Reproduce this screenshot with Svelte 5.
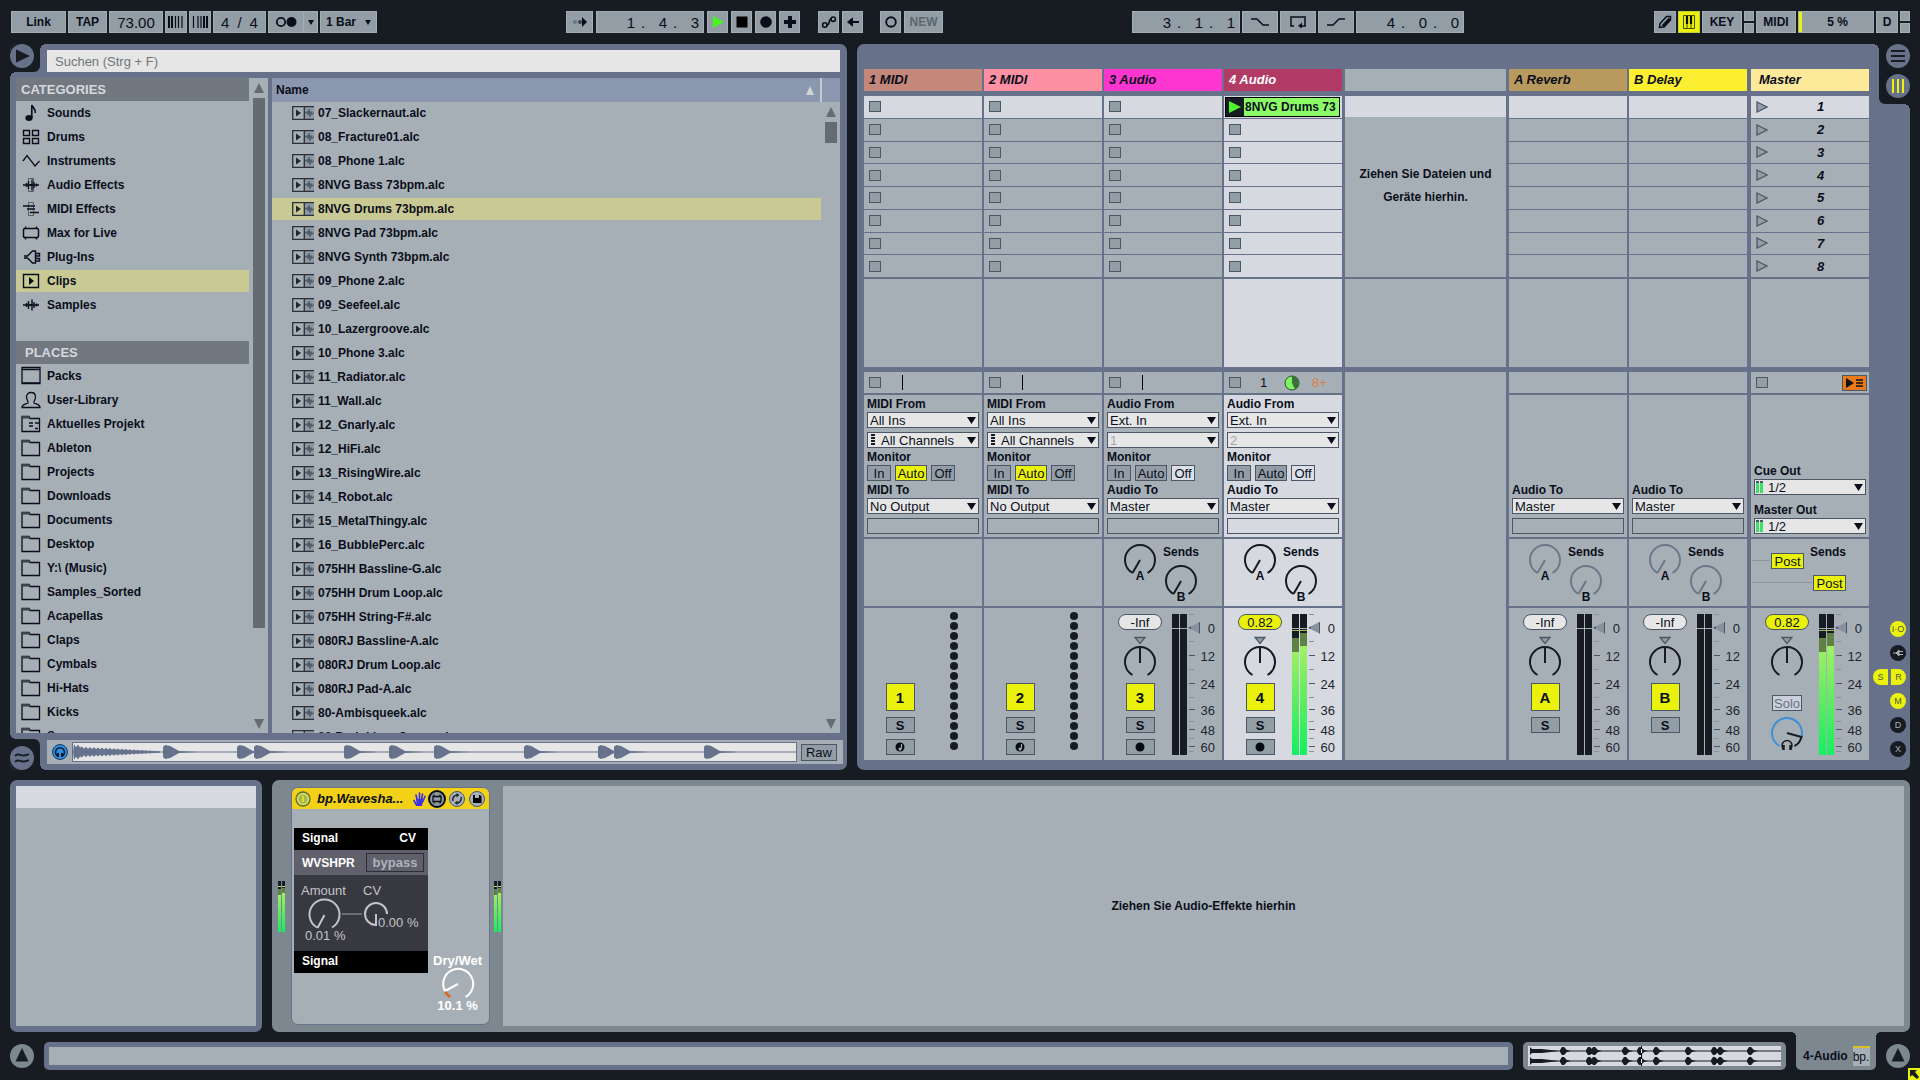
<script lang="ts">
	type Kind = 'midi' | 'audio' | 'return' | 'master';
	type Track = {
		id: string;
		title: string;
		color: string;
		kind: Kind;
		badge: string;
		input?: string;
		channel?: string;
		output?: string;
		monitor?: string;
		level?: boolean;
		selected?: boolean;
	};

	const categories = [
		{ name: 'Sounds', icon: 'note' },
		{ name: 'Drums', icon: 'pads' },
		{ name: 'Instruments', icon: 'wave' },
		{ name: 'Audio Effects', icon: 'audiofx' },
		{ name: 'MIDI Effects', icon: 'midifx' },
		{ name: 'Max for Live', icon: 'max' },
		{ name: 'Plug-Ins', icon: 'plug' },
		{ name: 'Clips', icon: 'clip' },
		{ name: 'Samples', icon: 'sample' }
	];

	const places = [
		{ name: 'Packs', icon: 'pack' },
		{ name: 'User-Library', icon: 'user' },
		{ name: 'Aktuelles Projekt', icon: 'project' },
		...[
			'Ableton', 'Projects', 'Downloads', 'Documents', 'Desktop', 'Y:\\ (Music)', 'Samples_Sorted',
			'Acapellas', 'Claps', 'Cymbals', 'Hi-Hats', 'Kicks', 'Snares'
		].map((name) => ({ name, icon: 'folder' }))
	];

	const files = [
		'07_Slackernaut', '08_Fracture01', '08_Phone 1', '8NVG Bass 73bpm', '8NVG Drums 73bpm',
		'8NVG Pad 73bpm', '8NVG Synth 73bpm', '09_Phone 2', '09_Seefeel', '10_Lazergroove',
		'10_Phone 3', '11_Radiator', '11_Wall', '12_Gnarly', '12_HiFi', '13_RisingWire', '14_Robot',
		'15_MetalThingy', '16_BubblePerc', '075HH Bassline-G', '075HH Drum Loop', '075HH String-F#',
		'080RJ Bassline-A', '080RJ Drum Loop', '080RJ Pad-A', '80-Ambisqueek', '80-Brainkiner-Sonne'
	];

	const tracks: Track[] = [
		{ id: 't1', title: '1 MIDI', color: '#c3887a', kind: 'midi', badge: '1', input: 'All Ins', channel: 'All Channels', output: 'No Output', monitor: 'Auto' },
		{ id: 't2', title: '2 MIDI', color: '#fd91a3', kind: 'midi', badge: '2', input: 'All Ins', channel: 'All Channels', output: 'No Output', monitor: 'Auto' },
		{ id: 't3', title: '3 Audio', color: '#fd36d0', kind: 'audio', badge: '3', input: 'Ext. In', channel: '1', output: 'Master', monitor: 'Off' },
		{ id: 't4', title: '4 Audio', color: '#b23b65', kind: 'audio', badge: '4', input: 'Ext. In', channel: '2', output: 'Master', monitor: 'Off', level: true, selected: true }
	];

	const mains: Track[] = [
		{ id: 'ra', title: 'A Reverb', color: '#b99a5e', kind: 'return', badge: 'A', output: 'Master' },
		{ id: 'rb', title: 'B Delay', color: '#fcee30', kind: 'return', badge: 'B', output: 'Master' },
		{ id: 'mm', title: 'Master', color: '#fde99a', kind: 'master', badge: '', level: true }
	];

	const scenes = [1, 2, 3, 4, 5, 6, 7, 8];
	const scale = [
		{ label: '0', y: 14 },
		{ label: '12', y: 42 },
		{ label: '24', y: 70 },
		{ label: '36', y: 96 },
		{ label: '48', y: 116 },
		{ label: '60', y: 133 }
	];
	const minorTicks = [1, 28, 56, 84, 108, 125, 138];

	let category = $state('Clips');
	let file = $state('8NVG Drums 73bpm');
	let search = $state('');

	const previewHits = [90, 164, 181, 271, 316, 361, 451, 525, 541, 631];
	const overviewHits = [32, 58, 63, 94, 109, 125, 157, 183, 189, 219];

	// sharp attack, then a leaf shaped decay
	function hit(x: number, mid: number, h: number, w: number) {
		const shape = [[0, 0.75], [0.15, 1], [0.45, 0.85], [0.75, 0.45], [1, 0.15], [2.2, 0]];
		const top = shape.map(([dx, dy]) => `${x + w * dx} ${mid - h * dy}`);
		const bottom = shape.map(([dx, dy]) => `${x + w * dx} ${mid + h * dy}`).reverse();
		return `M${[...top, ...bottom].join('L')}Z`;
	}

	function blob(x: number, mid: number) {
		return `M${x - 2} ${mid - 1}L${x} ${mid - 4}L${x + 2} ${mid - 4}L${x + 5} ${mid - 1}L${x + 9} ${mid}L${x + 5} ${mid + 1}L${x + 2} ${mid + 4}L${x} ${mid + 4}L${x - 2} ${mid + 1}Z`;
	}

	// decaying tone at the head of the sample
	function burst() {
		const height = (x: number) => (x < 8 ? 8 : 6) * Math.pow(1 - x / 100, 0.9) * (x % 4 === 1 ? 1 : 0.6);
		let d = 'M0 9';
		for (let x = 1; x < 88; x += 2) d += `L${x} ${(9 - height(x)).toFixed(1)}`;
		for (let x = 87; x > 0; x -= 2) d += `L${x} ${(9 + height(x)).toFixed(1)}`;
		return d + 'Z';
	}

	const previewPath = burst() + previewHits.map((x) => hit(x, 9, 7, 16)).join('');
	const overviewPath = [5, 15]
		.map((mid) => `M2 ${mid - 4}L4 ${mid - 2}L14 ${mid - 2}L31 ${mid}L14 ${mid + 2}L4 ${mid + 2}L2 ${mid + 4}Z` + overviewHits.map((x) => blob(x + 2, mid)).join(''))
		.join('');
</script>

{#snippet sideIcon(name: string)}
	<svg class="side-icon" viewBox="0 0 22 20" aria-hidden="true">
		{#if name === 'note'}
			<ellipse cx="9" cy="15" rx="3.6" ry="3" fill="#0a0e1a" />
			<path d="M11.8 15V2c1 3 4 3.5 3.4 8" fill="none" stroke="#0a0e1a" stroke-width="1.6" />
		{:else if name === 'pads'}
			<path d="M3.5 3.5h6v5h-6zM12.5 3.5h6v5h-6zM3.5 11.5h6v5h-6zM12.5 11.5h6v5h-6z" fill="none" stroke="#0a0e1a" stroke-width="1.4" />
		{:else if name === 'wave'}
			<path d="M3 10l4-5.5L15 15l4.5-5" fill="none" stroke="#0a0e1a" stroke-width="1.3" />
		{:else if name === 'audiofx' || name === 'sample'}
			<path d="M3 10h16M6.5 8v4M8.5 6v8M10.5 9v2M12 4.5v11M14 7v6M16.5 8.5v3" fill="none" stroke="#0a0e1a" stroke-width="1.4" />
			{#if name === 'audiofx'}<path d="M8.500 3.500h5v13h-5z" fill="none" stroke="#0a0e1a" stroke-opacity=".5" />{/if}
		{:else if name === 'midifx'}
			<path d="M3 7h12M7 10h8M10 13.500h9" fill="none" stroke="#0a0e1a" stroke-width="1.5" />
			<path d="M8.500 3.500h5v13h-5z" fill="none" stroke="#0a0e1a" stroke-opacity=".5" />
		{:else if name === 'max'}
			<path d="M5 5.500h12c1.300 0 1.500.500 1.500 1.500v6c0 1-.200 1.500-1.500 1.500H5c-1.300 0-1.500-.500-1.500-1.500V7c0-1 .200-1.500 1.500-1.500zM5.500 5.500v-2M16.500 5.500v-2M5.500 14.500v2M16.500 14.500v2" fill="none" stroke="#0a0e1a" stroke-width="1.5" />
		{:else if name === 'plug'}
			<path d="M4 9h3.500l5-5h3v12h-3l-5-5H4M15.500 6.500h4v2.500h-4M15.500 11.500h4V14h-4" fill="none" stroke="#0a0e1a" stroke-width="1.4" />
		{:else if name === 'clip'}
			<path d="M3.5 3.5h15v13h-15z" fill="none" stroke="#0a0e1a" stroke-width="1.4" />
			<path d="M9 6l5 4-5 4z" fill="#0a0e1a" />
		{:else if name === 'pack'}
			<path d="M2 1.5h18v16H2z" fill="none" stroke="#0a0e1a" stroke-width="1.3" />
			<path d="M2 3.5h18M2 17h18" stroke="#0a0e1a" stroke-width="1.6" />
		{:else if name === 'user'}
			<path d="M2 17.5c0-3 3-3 6-4.5 1-1-1.5-3-1.5-6C6.5 4 8.500 2.5 11 2.5S15.5 4 15.5 7c0 3-2.5 5-1.5 6 3 1.5 6 1.5 6 4.5z" fill="none" stroke="#0a0e1a" stroke-width="1.3" />
		{:else}
			<path d="M2 2.5h7l1 2h9.5v13H2z" fill="none" stroke="#0a0e1a" stroke-width="1.3" />
			<path d="M2 2h7l1 2.5H2z" fill="#3c434c" />
			{#if name === 'project'}<path d="M9 9h4M15 9h4M9 12h4M15 14.5h3" stroke="#0a0e1a" stroke-width="1.5" />{/if}
		{/if}
	</svg>
{/snippet}

{#snippet fileIcon()}
	<svg class="file-icon" viewBox="0 0 22 14" aria-hidden="true">
		<path d="M12 0h10v14H12z" fill="#8d97a1" />
		<path d="M22 .7H.7v12.6H22M12.3 0v14" fill="none" stroke="#2a3038" stroke-width="1.3" />
		<path d="M4 3.500l5 3.500-5 3.500z" fill="#20262e" />
		<path d="M13 7h1.500l.5-1.500 1 3 1-5 1 7 1-5 1 3 .5-1.500H22" stroke="#454d57" stroke-width=".9" fill="none" />
	</svg>
{/snippet}

{#snippet knob(color: string, angle: number, letter: string)}
	<svg class="knob" viewBox="0 0 40 42" aria-hidden="true">
		<path d="M12.5 30A15 15 0 1 1 27.5 30" fill="none" stroke={color} stroke-width="2" />
		<path d="M20 17V32" stroke={color} stroke-width="2" transform="rotate({angle} 20 17)" />
		<text x="20" y="37" text-anchor="middle">{letter}</text>
	</svg>
{/snippet}

{#snippet position(parts: string[], label: string)}
	<div class="cell position" role="group" aria-label={label}>
		{#each parts as part, i}
			<span>{part}</span>{#if i < 2}<span class="dot">.</span>{/if}
		{/each}
	</div>
{/snippet}

{#snippet picker(id: string, value: string, icon: string, dim: boolean)}
	<div class="picker" class:dim>
		{#if icon === 'midi'}
			<svg viewBox="0 0 4 12" aria-hidden="true"><path d="M2 0v12" stroke="#171c22" stroke-width="4" stroke-dasharray="2 1" /></svg>
		{:else if icon === 'level'}
			<svg viewBox="0 0 8 12" aria-hidden="true"><path d="M0 0h3v2H0zM4 0h3v2H4z" fill="#4d5660" /><path d="M0 2h3v10H0zM4 2h3v10H4z" fill="#3fe069" /></svg>
		{/if}
		<select {id}><option>{value}</option></select>
	</div>
{/snippet}

{#snippet minimeter()}
	<svg class="minimeter" viewBox="0 0 7 51" aria-hidden="true">
		<path d="M0 0h3v51H0zM4 0h3v51H4z" fill="#171c22" />
		<path d="M0 8h3v6H0zM4 7h3v6H4z" fill="#5f8143" />
		<path d="M0 5h3v1H0zM4 5h3v1H4z" fill="#cdd66e" />
		<path d="M0 14h3v37H0zM4 12h3v39H4z" fill="url(#lvl)" />
	</svg>
{/snippet}

{#snippet stop()}
	<button class="stop" aria-label="Stop"></button>
{/snippet}

{#snippet column(t: Track)}
	<section class="track {t.kind} {t.id}" class:selected={t.selected} aria-label={t.title}>
		<h3 style="background: {t.color}">{t.title}</h3>
		<div class="slots">
			{#each scenes as n}
				<div class="slot" class:hot={n === 1}>
					{#if t.kind === 'master'}
						<button class="launch" aria-label="Scene {n}">
							<svg viewBox="0 0 12 12" aria-hidden="true"><path d="M1 1l10 5-10 5z" fill="#929da6" stroke="#4b5766" stroke-width="1.3" /></svg>
						</button>
						<span class="scene">{n}</span>
					{:else if t.selected && n === 1}
						<button class="playing">
							<span class="go"><svg viewBox="0 0 12 12" aria-hidden="true"><path d="M0 0l12 6-12 6z" fill="#50f428" /></svg></span>
							<span class="name">8NVG Drums 73</span>
						</button>
					{:else if t.kind !== 'return'}
						{@render stop()}
					{/if}
				</div>
			{/each}
		</div>
		<div class="drop"></div>
		<div class="state">
			{#if t.kind !== 'return'}{@render stop()}{/if}
			{#if t.selected}
				<span class="count">1</span>
				<svg class="pie" viewBox="0 0 16 16" aria-hidden="true">
					<circle cx="8" cy="8" r="7" fill="#7cf45f" stroke="#2f4a35" />
					<path d="M8 1a7 7 0 0 1 3 13.3L8 8z" fill="#3f6f39" />
				</svg>
				<span class="loops">8+</span>
			{:else if t.kind === 'midi' || t.kind === 'audio'}
				<i class="bar"></i>
			{:else if t.kind === 'master'}
				<button class="back" aria-label="Back to arrangement">
					<svg viewBox="0 0 20 12" aria-hidden="true"><path d="M1 1l8 5-8 5z" fill="#111" /><path d="M11 3h7M11 6h7M11 9h7" stroke="#111" stroke-width="1.5" /></svg>
				</button>
			{/if}
		</div>
		<div class="io">
			{#if t.input}
				<label for="{t.id}-in">{t.kind === 'midi' ? 'MIDI' : 'Audio'} From</label>
				{@render picker(`${t.id}-in`, t.input, '', false)}
				{@render picker(`${t.id}-ch`, t.channel ?? '', t.kind === 'midi' ? 'midi' : '', t.kind === 'audio')}
				<span class="label">Monitor</span>
				<div class="monitor" role="group" aria-label="Monitor">
					{#each ['In', 'Auto', 'Off'] as mode}
						<button class={mode.toLowerCase()} class:on={t.monitor === mode}>{mode}</button>
					{/each}
				</div>
			{/if}
			{#if t.kind === 'master'}
				<label for="cue">Cue Out</label>
				{@render picker('cue', '1/2', 'level', false)}
				<label class="second" for="main-out">Master Out</label>
				{@render picker('main-out', '1/2', 'level', false)}
			{:else}
				<label for="{t.id}-out">{t.kind === 'midi' ? 'MIDI' : 'Audio'} To</label>
				{@render picker(`${t.id}-out`, t.output ?? '', '', false)}
				<div class="blank"></div>
			{/if}
		</div>
		<div class="sends">
			{#if t.kind === 'master'}
				<div class="post first"><i></i><button>Post</button></div>
				<span class="label">Sends</span>
				<div class="post"><i></i><button>Post</button></div>
			{:else if t.kind !== 'midi'}
				{@render knob(t.kind === 'return' ? '#6d7789' : '#171c22', 30, 'A')}
				<div class="send-b">
					<span class="label">Sends</span>
					{@render knob(t.kind === 'return' ? '#6d7789' : '#171c22', 30, 'B')}
				</div>
			{/if}
		</div>
		<div class="mixer">
			<div class="strip">
				{#if t.kind !== 'midi'}
					<button class="pill" class:on={t.level}>{t.level ? '0.82' : '-Inf'}</button>
					<svg class="pan" viewBox="0 0 34 42" aria-hidden="true">
						<path d="M12 1.5h10l-5 6z" fill="#929da6" stroke="#4b5766" stroke-width="1.3" />
						<path d="M9.5 39A15 15 0 1 1 24.5 39" fill="none" stroke="#171c22" stroke-width="2" />
						<path d="M17 11v16" stroke="#171c22" stroke-width="2" />
					</svg>
				{/if}
				{#if t.kind === 'master'}
					<button class="cue-solo">Solo</button>
					<svg class="cue" viewBox="0 0 34 36" aria-hidden="true">
						<path d="M9.5 31A15 15 0 1 1 31.5 22" fill="none" stroke="#3c8fd6" stroke-width="2" />
						<path d="M17 18l14.5 4c-1 4-3 7-7 9" fill="none" stroke="#171c22" stroke-width="2" />
						<path d="M13.5 34a5 5 0 1 1 7 0" fill="none" stroke="#171c22" stroke-width="1.5" />
						<path d="M13.5 30v5M20.5 30v5" stroke="#171c22" stroke-width="2.5" />
					</svg>
				{:else}
					<button class="activate">{t.badge}</button>
					<button class="solo">S</button>
					{#if t.kind !== 'return'}
						<button class="arm" aria-label="Arm">
							<svg viewBox="0 0 12 12" aria-hidden="true">
								<circle cx="6" cy="6" r="4.5" fill="#070b14" />
								{#if t.kind === 'midi'}<path d="M7.5 3v4.5" stroke="#a7afb6" stroke-width="1.2" /><circle cx="6" cy="8" r="1.5" fill="#a7afb6" />{/if}
							</svg>
						</button>
					{/if}
				{/if}
			</div>
			{#if t.kind === 'midi'}
				<svg class="dots" viewBox="0 0 10 142" aria-hidden="true">
					{#each Array(14) as _, i}<circle cx="5" cy={2 + i * 10} r="4" fill="#171c22" />{/each}
				</svg>
			{:else}
				<div class="fader">
					<svg viewBox="0 0 48 142" aria-hidden="true">
						<path d="M0 0h7v141H0zM8 0h7v141H8z" fill="#171c22" />
						{#if t.level}
							<path d="M0 24h7v14H0zM8 19h7v13H8z" fill="#5f8143" />
							<path d="M0 38h7v103H0zM8 32h7v109H8z" fill="url(#lvl)" />
							<path d="M0 16.5h15" stroke="#a3bd5c" />
						{/if}
						<path d="M0 14.5h15" stroke="#a7afb6" />
						{#each minorTicks as y}<path d="M17 {y - 0.5}h5" stroke="#87919b" />{/each}
						{#each scale as s}
							{#if s.y > 14}<path d="M17 {s.y - 0.5}h6" stroke="#4b5766" />{/if}
							<text x="43" y={s.y + 5} text-anchor="end">{s.label}</text>
						{/each}
					</svg>
					<input type="range" min="0" max="100" value="94" aria-label="{t.title} volume" />
				</div>
			{/if}
		</div>
	</section>
{/snippet}

{#snippet scrollArrow(down: boolean)}
	<svg class="arrow" viewBox="0 0 10 10" aria-hidden="true"><path d={down ? 'M0 0h10L5 10z' : 'M0 10h10L5 0z'} fill="#646b71" /></svg>
{/snippet}

<svg class="defs" width="0" height="0" aria-hidden="true">
	<defs>
		<linearGradient id="lvl" x1="0" y1="0" x2="0" y2="1">
			<stop offset="0" stop-color="#a2f064" />
			<stop offset=".5" stop-color="#5feb62" />
			<stop offset="1" stop-color="#14f060" />
		</linearGradient>
	</defs>
</svg>

<div class="app">
	<header class="toolbar">
		<div class="group">
			<button class="cell link">Link</button>
			<button class="cell text">TAP</button>
			<div class="cell tempo">73.00</div>
			<button class="cell icon" aria-label="Nudge down"><svg viewBox="0 0 16 12"><path d="M1 0v12M4 0v12" stroke="#0a0e1a" stroke-width="2" /><path d="M7.5 0v12M10.5 0v12M14 0v12" stroke="#0a0e1a" stroke-width="1.2" /></svg></button>
			<button class="cell icon" aria-label="Nudge up"><svg viewBox="0 0 16 12"><path d="M1.5 0v12M6 0v12M9 0v12" stroke="#0a0e1a" stroke-width="1.2" /><path d="M12 0v12M15 0v12" stroke="#0a0e1a" stroke-width="2" /></svg></button>
			<div class="cell signature"><span>4</span><span>/</span><span>4</span></div>
			<button class="cell metro" aria-label="Metronome">
				<svg viewBox="0 0 22 12"><circle cx="6" cy="6" r="4.2" fill="none" stroke="#0a0e1a" stroke-width="1.8" /><circle cx="16.5" cy="6" r="5" fill="#0a0e1a" /></svg>
				<span class="split"><svg viewBox="0 0 6 5"><path d="M0 0h6L3 5z" fill="#0a0e1a" /></svg></span>
			</button>
			<div class="cell quant"><select aria-label="Quantization"><option>1 Bar</option></select></div>
		</div>

		<div class="group transport">
			<button class="cell follow" aria-label="Follow"><svg viewBox="0 0 16 10"><circle cx="3" cy="5" r="2" fill="#6b7580" /><circle cx="8" cy="5" r="2" fill="#3a424c" /><path d="M10 0v10l5-5z" fill="#0a0e1a" /></svg></button>
			{@render position(['1', '4', '3'], 'Arrangement position')}
			<button class="cell icon" aria-label="Play"><svg viewBox="0 0 16 12"><path d="M3 0l11 6-11 6z" fill="#46f51c" /></svg></button>
			<button class="cell icon" aria-label="Stop"><svg viewBox="0 0 16 12"><path d="M2.5 .5h11v11h-11z" fill="#000" /></svg></button>
			<button class="cell icon" aria-label="Record"><svg viewBox="0 0 16 12"><circle cx="8" cy="6" r="5.8" fill="#0a0e1a" /></svg></button>
			<button class="cell icon" aria-label="Overdub"><svg viewBox="0 0 16 12"><path d="M8 0v12M2 6h12" stroke="#0a0e1a" stroke-width="4" /></svg></button>
			<button class="cell icon auto" aria-label="Automation arm"><svg viewBox="0 0 16 12"><circle cx="3.800" cy="9" r="2.2" fill="none" stroke="#0a0e1a" stroke-width="1.6" /><circle cx="12.2" cy="3.200" r="2.2" fill="none" stroke="#0a0e1a" stroke-width="1.6" /><path d="M6 9c3 0 1.5-6 4-6" fill="none" stroke="#0a0e1a" stroke-width="1.6" /></svg></button>
			<button class="cell icon" aria-label="Re-enable automation"><svg viewBox="0 0 16 12"><path d="M2.500 6l5-4v8z" fill="#0a0e1a" stroke="#0a0e1a" /><path d="M7 6h7" stroke="#0a0e1a" stroke-width="2" /></svg></button>
			<button class="cell icon session-rec" aria-label="Session record"><svg viewBox="0 0 16 12"><circle cx="8" cy="6" r="4.8" fill="none" stroke="#0a0e1a" stroke-width="1.9" /></svg></button>
			<button class="cell text faint">NEW</button>
		</div>

		<div class="group">
			{@render position(['3', '1', '1'], 'Loop start')}
			<button class="cell wide" aria-label="Punch in"><svg viewBox="0 0 18 12"><path d="M0 3h6l6 6h6" fill="none" stroke="#0a0e1a" stroke-width="1.5" /></svg></button>
			<button class="cell wide" aria-label="Loop"><svg viewBox="0 0 18 12"><path d="M5 10H2V1h14v9h-4" fill="none" stroke="#0a0e1a" stroke-width="1.5" /><path d="M13 6.5v6L9 10z" fill="#0a0e1a" /></svg></button>
			<button class="cell wide" aria-label="Punch out"><svg viewBox="0 0 18 12"><path d="M0 9h6l6-6h6" fill="none" stroke="#0a0e1a" stroke-width="1.5" /></svg></button>
			{@render position(['4', '0', '0'], 'Loop length')}
		</div>

		<div class="group">
			<button class="cell icon" aria-label="Draw mode"><svg viewBox="0 0 16 14"><path d="M2.500 12.500l.5-4L9.500 1.500h4v3L6.500 12z" fill="none" stroke="#0a0e1a" stroke-width="1.5" /><path d="M6 11.500L13 4" stroke="#0a0e1a" stroke-width="3.500" /></svg></button>
			<button class="cell icon lit" aria-label="Computer keyboard"><svg viewBox="0 0 16 14"><path d="M2.5 .5h11v13h-11zM6 9v5M10 9v5" fill="none" stroke="#4b5010" /><path d="M6 1v8M10 1v8" stroke="#0a0e1a" stroke-width="2.2" /></svg></button>
			<button class="cell text">KEY</button>
			<div class="pair"><i></i><i></i></div>
			<button class="cell text">MIDI</button>
			<div class="cell cpu"><i></i><span>5 %</span></div>
			<button class="cell icon">D</button>
			<div class="pair"><i></i><i></i></div>
		</div>
	</header>

	<div class="workspace">
		<aside class="browser">
			<div class="top">
				<div class="notch upper">
					<button class="round" aria-label="Hide browser"><svg viewBox="0 0 24 24"><circle cx="12" cy="12" r="12" fill="#677189" /><path d="M6 5.5v13L20 12z" fill="#171c22" /></svg></button>
				</div>
				<input type="text" bind:value={search} placeholder="Suchen (Strg + F)" aria-label="Suchen" />
			</div>

			<div class="lists">
				<nav class="sidebar">
					<div class="scroll">
						<h2>CATEGORIES</h2>
						<ul>
							{#each categories as c}
								<li><button class:active={c.name === category} onclick={() => (category = c.name)}>{@render sideIcon(c.icon)}{c.name}</button></li>
							{/each}
						</ul>
						<h2 class="places">PLACES</h2>
						<ul>
							{#each places as p}
								<li><button>{@render sideIcon(p.icon)}{p.name}</button></li>
							{/each}
						</ul>
					</div>
					<div class="scrollbar">
						{@render scrollArrow(false)}
						<i class="thumb tall"></i>
						{@render scrollArrow(true)}
					</div>
				</nav>

				<div class="content">
					<div class="head"><span>Name</span><svg viewBox="0 0 10 10" aria-hidden="true"><path d="M0 10h8L4 1z" fill="#d0d5d2" /></svg></div>
					<div class="rows">
						<ul class="scroll">
							{#each files as f}
								<li><button class:active={f === file} onclick={() => (file = f)}>{@render fileIcon()}{f}.alc</button></li>
							{/each}
						</ul>
						<div class="scrollbar">
							{@render scrollArrow(false)}
							<i class="thumb"></i>
							{@render scrollArrow(true)}
						</div>
					</div>
				</div>
			</div>

			<div class="bottom">
				<div class="notch lower">
					<button class="round" aria-label="Groove pool"><svg viewBox="0 0 24 24"><circle cx="12" cy="12" r="12" fill="#677189" /><path d="M5 10c4-5 6 3 14-2M5 16c4-5 6 3 14-2" fill="none" stroke="#171c22" stroke-width="2" /></svg></button>
				</div>
				<div class="preview">
					<button class="listen" aria-label="Preview"><svg viewBox="0 0 16 16"><circle cx="8" cy="8" r="7.5" fill="#2d8fe6" stroke="#1c3b5e" /><path d="M5.5 12a4.5 4.5 0 1 1 5 0" fill="none" stroke="#0d1a2c" stroke-width="1.6" /><path d="M6 9v4M10 9v4" stroke="#0d1a2c" stroke-width="2" /></svg></button>
					<svg class="waveform" viewBox="0 0 723 18" preserveAspectRatio="none" aria-hidden="true"><path d={previewPath} fill="#67738c" /><path d="M0 9h723" stroke="#67738c" /></svg>
					<button class="raw">Raw</button>
				</div>
			</div>
		</aside>

		<main class="session">
			<div class="tracks">
				{#each tracks as t}{@render column(t)}{/each}
				<section class="track empty">
					<h3></h3>
					<div class="hint"><div class="hot"></div><p>Ziehen Sie Dateien und<br />Geräte hierhin.</p></div>
					<div class="drop"></div>
					<div class="rest"></div>
				</section>
				{#each mains as t}{@render column(t)}{/each}
			</div>
			<div class="rail">
				<div class="notch right">
					<button class="round" aria-label="Arrangement view"><svg viewBox="0 0 24 24"><circle cx="12" cy="12" r="12" fill="#677189" /><path d="M5 7h14M5 12h14M5 17h14" stroke="#171c22" stroke-width="2" /></svg></button>
					<button class="round" aria-label="Session view"><svg viewBox="0 0 24 24"><circle cx="12" cy="12" r="12" fill="#677189" /><path d="M7 5v14M12 5v14M17 5v14" stroke="#eaf20c" stroke-width="2" /></svg></button>
				</div>
				<div class="toggles">
					<button class="on">I·O</button>
					<button aria-label="Crossfader"><svg viewBox="0 0 12 12"><path d="M1 6h3l3-3v6L4 6M7 4.5h4M7 7.5h4" stroke="#a7afb6" fill="#a7afb6" /></svg></button>
					<div><button class="on half-l">S</button><button class="on half-r">R</button></div>
					<button class="on">M</button>
					<button>D</button>
					<button>X</button>
				</div>
			</div>
		</main>
	</div>

	<div class="detail">
		<div class="info"><div class="info-body"></div></div>
		<div class="chain">
			{@render minimeter()}
			<article class="device">
				<header>
					<button class="power" aria-label="Device on"><svg viewBox="0 0 16 16"><circle cx="8" cy="8" r="7" fill="#d3e04a" stroke="#5d6a48" stroke-width="1.3" /><circle cx="8" cy="8" r="4.5" fill="#a9b35c" /><path d="M8 5v6" stroke="#eaf20c" stroke-width="1.5" /></svg></button>
					<h3>bp.Wavesha...</h3>
					<svg class="hand" viewBox="0 0 13 14" aria-hidden="true"><path d="M4 14L1 8.5M4.5 9L3 3M6.5 8V1M8.5 8l1-6M9.5 10L12 4.5" stroke="#3a32e8" stroke-width="1.7" stroke-linecap="round" /><path d="M3 7h7l-1 7H4z" fill="#3a32e8" /></svg>
					<button aria-label="Edit"><svg viewBox="0 0 18 18"><circle cx="9" cy="9" r="8" fill="#8e98a2" stroke="#0a0e1a" stroke-width="2" /><path d="M5 6.500h8v5H5zM6 6.500v-2M12 6.500v-2M6 11.500v2M12 11.500v2" fill="none" stroke="#0a0e1a" stroke-width="1.3" /></svg></button>
					<button aria-label="Hot swap"><svg viewBox="0 0 18 18"><circle cx="9" cy="9" r="7.5" fill="#a7afb6" stroke="#4b5766" /><path d="M5 11a4.5 4.5 0 0 1 4-6M13 7a4.5 4.5 0 0 1-4 6" fill="none" stroke="#20262e" stroke-width="1.5" /><path d="M8.500 3l3 2-3 2.500zM9.500 15l-3-2 3-2.500z" fill="#20262e" /></svg></button>
					<button aria-label="Save"><svg viewBox="0 0 18 18"><circle cx="9" cy="9" r="7.5" fill="#a7afb6" stroke="#4b5766" /><path d="M5 5h7l1.5 1.5V13H5z" fill="#000" /><path d="M7 5h4v3H7z" fill="#a7afb6" /></svg></button>
				</header>
				<div class="body">
					<div class="plugin">
						<div class="port"><span>Signal</span><span>CV</span></div>
						<div class="name"><span>WVSHPR</span><button>bypass</button></div>
						<svg viewBox="0 0 134 76" aria-hidden="true">
							<text x="7" y="20">Amount</text>
							<text x="69" y="20">CV</text>
							<path d="M23 52.5A15 15 0 1 1 38 52.5M30.5 40l-7 13" fill="none" stroke="#c3c4c8" stroke-width="2" />
							<path d="M48 39h20" stroke="#a2a3a8" />
							<path d="M82 50A11 11 0 1 1 93 39M82 39v12" fill="none" stroke="#c3c4c8" stroke-width="2" />
							<text x="11" y="65">0.01 %</text>
							<text x="84" y="52">0.00 %</text>
						</svg>
						<div class="port"><span>Signal</span></div>
					</div>
					<div class="drywet">
						<span>Dry/Wet</span>
						<svg viewBox="0 0 34 32" aria-hidden="true">
							<path d="M4 24A15 15 0 1 1 24.5 30M17 17L4 24" fill="none" stroke="#fff" stroke-width="2" />
							<path d="M4 25l5 5" stroke="#e0641c" stroke-width="2.5" />
						</svg>
						<span>10.1 %</span>
					</div>
				</div>
			</article>
			{@render minimeter()}
			<div class="fxdrop">Ziehen Sie Audio-Effekte hierhin</div>
		</div>
	</div>

	<footer>
		<button class="round" aria-label="Hide info view"><svg viewBox="0 0 24 24"><circle cx="12" cy="12" r="12" fill="#7d8790" /><path d="M12 4l6.5 13.5h-13z" fill="#171c22" /></svg></button>
		<div class="message"></div>
		<svg class="overview" viewBox="0 0 253 20" preserveAspectRatio="none" aria-hidden="true">
			<path d="M0 0h253v20H0z" fill="#d6dae0" />
			<path d={overviewPath} fill="#171c22" />
			<path d="M2 5h251M2 15h251" stroke="#171c22" />
			<path d="M113.5 0v20" stroke="#000" /><path d="M113.5 3v4M113.5 13v4" stroke="#fff" />
		</svg>
		<div class="tab">4-Audio <span>bp.</span></div>
		<button class="round" aria-label="Hide detail view"><svg viewBox="0 0 24 24"><circle cx="12" cy="12" r="12" fill="#7d8790" /><path d="M12 4l6.5 13.5h-13z" fill="#171c22" /></svg></button>
	</footer>
	<svg class="grip" viewBox="0 0 12 12" aria-hidden="true"><path d="M0 0h12v12H0z" fill="#eaf20c" /><path d="M2 2h7L7 4l4 5-2 2-5-4-2 2z" fill="#171c22" /></svg>
</div>

<style>
	:global(body) {
		margin: 0;
		background: #171c22;
	}

	.app,
	.app :global(*) {
		box-sizing: border-box;
	}

	.app {
		--dark: #171c22;
		--panel: #677189;
		--detail: #7d8790;
		--surface: #a7afb6;
		--light: #d6dae0;
		--button: #929da6;
		--line: #4b5766;
		--on: #eaf20c;
		display: flex;
		flex-direction: column;
		height: 100vh;
		min-width: 1400px;
		padding: 0 10px 10px;
		overflow: hidden;
		position: relative;
		background: var(--dark);
		color: #0a0e1a;
		font: bold 12px/1 'Liberation Sans', Arial, sans-serif;
	}

	.defs {
		position: absolute;
	}

	button,
	input,
	select {
		margin: 0;
		padding: 0;
		border: 0;
		border-radius: 0;
		background: none;
		color: inherit;
		font: inherit;
	}

	button {
		display: flex;
		align-items: center;
		justify-content: center;
		cursor: pointer;
	}

	svg {
		display: block;
		flex: none;
	}

	ul,
	h2,
	h3,
	p {
		margin: 0;
		padding: 0;
		list-style: none;
		font-size: inherit;
	}

	/* toolbar */
	.toolbar {
		flex: none;
		display: grid;
		grid-template-columns: 555fr 566fr 522fr auto;
		align-items: center;
		height: 44px;
		padding-left: 1px;
	}

	.group {
		display: flex;
		gap: 2px;
	}

	.transport {
		gap: 3px;
	}

	.cell {
		flex: none;
		display: flex;
		align-items: center;
		justify-content: center;
		height: 22px;
		border: 1px solid #a3adb4;
		background: var(--button);
	}

	.link {
		width: 55px;
	}

	.text {
		width: 39px;
	}

	.group:last-child .text {
		width: 40px;
	}

	.faint {
		color: #5d6770;
	}

	.tempo {
		width: 54px;
		font-size: 15px;
		font-weight: normal;
	}

	.icon {
		width: 21px;
	}

	.group:first-child .icon,
	.group:last-child .icon {
		width: 22px;
	}

	.icon svg {
		width: 16px;
		height: 12px;
	}

	.group:last-child .icon svg {
		height: 14px;
	}

	.wide {
		width: 36px;
	}

	.wide svg {
		width: 18px;
		height: 12px;
	}

	.signature {
		width: 53px;
		gap: 8px;
		font-size: 15px;
		font-weight: normal;
	}

	.metro {
		width: 50px;
		justify-content: space-between;
		padding-left: 6px;
	}

	.metro > svg {
		width: 22px;
		height: 12px;
	}

	.split {
		display: grid;
		place-items: center;
		width: 14px;
		height: 20px;
		border-left: 1px solid #a3adb4;
	}

	.split svg {
		width: 6px;
		height: 5px;
	}

	.quant {
		position: relative;
		width: 57px;
	}

	.quant select {
		width: 100%;
		height: 100%;
		padding-left: 5px;
		appearance: none;
	}

	.quant::after,
	.picker::after {
		content: '';
		position: absolute;
		right: 5px;
		top: 8px;
		width: 6px;
		height: 5px;
		background: #0a0e1a;
		clip-path: polygon(0 0, 100% 0, 50% 100%);
		pointer-events: none;
	}

	.follow {
		width: 27px;
	}

	.follow svg {
		width: 16px;
		height: 10px;
	}

	.position {
		width: 108px;
		justify-content: flex-end;
		font-size: 15px;
		font-weight: normal;
	}

	.position span {
		width: 16px;
		text-align: center;
	}

	.position .dot {
		text-align: left;
		padding-left: 2px;
	}

	.auto {
		margin-left: 15px;
	}

	.session-rec {
		margin-left: 14px;
	}

	.lit {
		background: var(--on);
		border-color: #c6cd3e;
	}

	.pair {
		display: flex;
		flex-direction: column;
		justify-content: space-between;
		width: 10px;
		height: 22px;
	}

	.pair i {
		height: 10px;
		border: 1px solid #a3adb4;
		background: var(--button);
	}

	.cpu {
		width: 76px;
		justify-content: flex-start;
	}

	.cpu i {
		width: 3px;
		height: 100%;
		background: var(--on);
	}

	.cpu span {
		flex: 1;
		text-align: center;
	}

	/* panels */
	.workspace {
		flex: 726 1 0;
		min-height: 0;
		display: grid;
		grid-template-columns: 837fr 1053fr;
		gap: 10px;
	}

	.browser,
	.session {
		min-width: 0;
		min-height: 0;
		border-radius: 7px;
		background: var(--panel);
	}

	.browser {
		display: flex;
		flex-direction: column;
		overflow: hidden;
	}

	.round {
		flex: none;
		width: 24px;
		height: 24px;
		border-radius: 50%;
	}

	.round svg {
		width: 24px;
		height: 24px;
	}

	.notch {
		position: relative;
		flex: none;
		display: flex;
		background: var(--dark);
	}

	.notch::before,
	.notch::after {
		content: '';
		position: absolute;
		width: 6px;
		height: 6px;
	}

	.upper {
		width: 30px;
		border-bottom-right-radius: 6px;
	}

	.upper::before {
		left: 100%;
		top: 0;
		background: radial-gradient(circle at 100% 100%, transparent 6px, var(--dark) 6px);
	}

	.upper::after {
		left: 0;
		top: 100%;
		background: radial-gradient(circle at 100% 100%, transparent 6px, var(--dark) 6px);
	}

	.lower {
		align-items: flex-end;
		width: 30px;
		border-top-right-radius: 6px;
	}

	.lower::before {
		left: 100%;
		bottom: 0;
		background: radial-gradient(circle at 100% 0, transparent 6px, var(--dark) 6px);
	}

	.lower::after {
		left: 0;
		bottom: 100%;
		background: radial-gradient(circle at 100% 0, transparent 6px, var(--dark) 6px);
	}

	.top {
		flex: none;
		display: flex;
		align-items: flex-end;
		height: 28px;
		padding-right: 7px;
	}

	.top .notch {
		height: 28px;
		margin-right: 7px;
	}

	.top input {
		flex: 1;
		height: 22px;
		padding-left: 8px;
		background: #e6e6e6;
		font-size: 13px;
		font-weight: normal;
		outline: none;
	}

	.top input::placeholder {
		color: #70757a;
	}

	.lists {
		flex: 1;
		min-height: 0;
		display: grid;
		grid-template-columns: 252px 1fr;
		gap: 4px;
		padding: 6px 7px 6px 6px;
	}

	.sidebar,
	.rows {
		display: flex;
		min-height: 0;
		background: var(--surface);
	}

	.rows {
		flex: 1;
	}

	.content {
		display: flex;
		flex-direction: column;
		min-width: 0;
		min-height: 0;
	}

	.scroll {
		flex: 1;
		min-width: 0;
		overflow: hidden;
	}

	.sidebar h2 {
		height: 23px;
		margin-bottom: 1px;
		padding-left: 5px;
		background: #71787f;
		color: #d5d9de;
		font-size: 13px;
		line-height: 23px;
	}

	.sidebar .places {
		margin-top: 23px;
		padding-left: 9px;
	}

	li {
		height: 24px;
	}

	li button {
		width: 100%;
		height: 22px;
		justify-content: flex-start;
		white-space: nowrap;
	}

	.sidebar li button {
		gap: 5px;
		padding-left: 4px;
	}

	.rows li button {
		gap: 4px;
		padding-left: 20px;
	}

	li .active {
		background: #c9c994;
	}

	.side-icon {
		width: 22px;
		height: 20px;
	}

	.file-icon {
		width: 22px;
		height: 14px;
	}

	.scrollbar {
		flex: none;
		display: flex;
		flex-direction: column;
		align-items: center;
		gap: 5px;
		width: 19px;
		padding: 5px 0 4px;
	}

	.scrollbar .arrow {
		width: 10px;
		height: 10px;
	}

	.thumb {
		flex: none;
		width: 12px;
		height: 21px;
		margin-bottom: auto;
		background: #646b71;
	}

	.tall {
		height: 82%;
	}

	.head {
		flex: none;
		display: flex;
		align-items: center;
		justify-content: space-between;
		height: 24px;
		padding: 0 24px 0 4px;
		background: linear-gradient(to left, transparent 18px, #c3cad2 18px, #c3cad2 20px, transparent 20px) #8b97ae;
	}

	.head svg {
		width: 10px;
		height: 10px;
	}

	.bottom {
		flex: none;
		display: flex;
		height: 31px;
		padding-right: 7px;
	}

	.preview {
		flex: 1;
		display: flex;
		align-items: center;
		gap: 4px;
		height: 24px;
		margin: 1px 0 0 7px;
		padding: 0 6px 0 5px;
		background: var(--surface);
	}

	.listen svg {
		width: 16px;
		height: 16px;
	}

	.waveform {
		flex: 1;
		min-width: 0;
		height: 20px;
		border: 1px solid var(--panel);
		background: #e6e6e6;
	}

	.raw {
		width: 36px;
		height: 17px;
		border: 1px solid var(--line);
		background: var(--button);
		font-size: 13px;
		font-weight: normal;
	}

	/* session */
	.session {
		display: flex;
		padding-left: 7px;
	}

	.tracks {
		flex: 1;
		min-width: 0;
		display: grid;
		grid-template-columns: repeat(4, 118fr) 162fr 119fr 118fr 120fr;
		gap: 2px;
		padding: 25px 0 10px;
	}

	.track {
		--bg: var(--surface);
		display: flex;
		flex-direction: column;
		gap: 2px;
		min-width: 0;
	}

	.selected {
		--bg: var(--light);
	}

	.ra {
		margin-left: 1px;
	}

	.mm {
		margin-left: 2px;
	}

	.track h3 {
		flex: none;
		height: 22px;
		margin-bottom: 3px;
		padding-left: 5px;
		font-size: 13px;
		font-style: italic;
		line-height: 22px;
	}

	.selected h3 {
		color: #fff;
	}

	.master h3 {
		padding-left: 8px;
	}

	.slots {
		flex: none;
		display: grid;
		grid-template-rows: repeat(8, 1fr);
		gap: 1px;
		height: 181px;
	}

	.slot {
		display: flex;
		align-items: center;
		min-height: 0;
		padding-left: 5px;
		background: var(--bg);
	}

	.slot.hot,
	.hint .hot {
		background: var(--light);
	}

	.stop {
		width: 12px;
		height: 11px;
		border: 1px solid var(--line);
		background: var(--button);
	}

	.playing {
		flex: 1;
		align-self: stretch;
		justify-content: flex-start;
		min-width: 0;
		margin: 1px 2px 1px -4px;
		border: 1px solid #000;
		background: #8bfb66;
	}

	.go {
		display: grid;
		place-items: center;
		width: 18px;
		height: 100%;
		background: var(--dark);
	}

	.go svg {
		width: 12px;
		height: 12px;
	}

	.playing .name {
		padding-left: 1px;
		white-space: nowrap;
	}

	.launch svg {
		width: 12px;
		height: 12px;
	}

	.scene {
		flex: 1;
		padding-left: 4px;
		text-align: center;
		font-size: 13px;
		font-style: italic;
	}

	.drop {
		flex: 1;
		min-height: 0;
		margin-bottom: 3px;
		background: var(--bg);
	}

	.state {
		flex: none;
		display: flex;
		align-items: center;
		height: 21px;
		padding-left: 5px;
		background: var(--surface);
		font-size: 13px;
		font-weight: normal;
	}

	.bar {
		width: 1px;
		height: 15px;
		margin-left: 21px;
		background: #000;
	}

	.count {
		width: 43px;
		padding-left: 2px;
		text-align: center;
	}

	.pie {
		width: 16px;
		height: 16px;
		margin-right: 12px;
	}

	.loops {
		color: #dc8045;
	}

	.back {
		width: 25px;
		height: 16px;
		margin: 0 2px 0 auto;
		border: 1px solid var(--line);
		background: #e87a1c;
	}

	.back svg {
		width: 20px;
		height: 12px;
	}

	.io {
		flex: none;
		display: flex;
		flex-direction: column;
		justify-content: flex-end;
		height: 142px;
		padding: 0 3px 3px;
		background: var(--bg);
	}

	.io label,
	.io .label {
		height: 17px;
		line-height: 18px;
	}

	.io .second {
		margin-top: 6px;
	}

	.picker {
		position: relative;
		display: flex;
		align-items: center;
		height: 16px;
		border: 1px solid var(--line);
		background: #e6e6e6;
	}

	.picker + .picker {
		margin-top: 4px;
	}

	.picker svg {
		width: 8px;
		height: 12px;
		margin-left: 1px;
	}

	.picker select {
		flex: 1;
		min-width: 0;
		height: 14px;
		padding-left: 2px;
		appearance: none;
		font-size: 13px;
		font-weight: normal;
	}

	.picker svg + select {
		padding-left: 4px;
	}

	.picker.dim select {
		color: #a2a7ac;
	}

	.picker::after {
		top: 4px;
		right: 2px;
		width: 9px;
		height: 7px;
	}

	.blank {
		height: 16px;
		margin-top: 4px;
		border: 1px solid var(--line);
	}

	.monitor {
		display: flex;
		gap: 4px;
	}

	.monitor button,
	.post button,
	.solo,
	.arm,
	.cue-solo {
		height: 16px;
		border: 1px solid var(--line);
		background: var(--button);
		font-size: 13px;
		font-weight: normal;
	}

	.monitor button {
		width: 24px;
	}

	.monitor .auto {
		width: 32px;
		margin: 0;
	}

	.monitor .auto.on {
		background: var(--on);
	}

	.monitor .off.on {
		background: #dadfe8;
	}

	.sends {
		flex: none;
		display: flex;
		height: 67px;
		padding: 4px 0 0 16px;
		background: var(--bg);
	}

	.knob {
		width: 40px;
		height: 42px;
	}

	.knob text {
		font-size: 12px;
		fill: #0a0e1a;
	}

	.send-b {
		display: flex;
		flex-direction: column;
		align-items: center;
		gap: 6px;
		padding-top: 3px;
		margin-left: 1px;
	}

	.master .sends {
		display: grid;
		grid-template-columns: 54px 1fr;
		grid-template-rows: 28px 22px;
		align-content: start;
		padding: 2px 0 0 1px;
	}

	.master .sends .label {
		padding: 5px 0 0 4px;
	}

	.post {
		grid-column: 1 / -1;
		display: flex;
		align-items: flex-end;
		width: 94px;
	}

	.post.first {
		grid-column: 1;
		width: 52px;
	}

	.post i {
		flex: 1;
		height: 1px;
		margin: 0 1px 8px 0;
		background: #8a949e;
	}

	.post button {
		width: 33px;
		background: var(--on);
	}

	.mixer {
		flex: none;
		display: flex;
		height: 152px;
		padding-top: 6px;
		background: var(--bg);
	}

	.strip {
		display: grid;
		grid-template-columns: 72px;
		grid-template-rows: 16px 53px 28px 22px 22px;
		align-items: end;
		align-content: start;
		justify-items: center;
		width: 68px;
	}

	.pill {
		grid-row: 1;
		width: 44px;
		height: 16px;
		border: 1px solid var(--line);
		border-radius: 8px;
		background: #e6e6e6;
		font-size: 13px;
		font-weight: normal;
	}

	.pill.on {
		background: var(--on);
	}

	.pan {
		grid-row: 2;
		align-self: center;
		width: 34px;
		height: 42px;
	}

	.activate {
		grid-row: 3;
		width: 29px;
		height: 28px;
		border: 1px solid var(--line);
		background: var(--on);
		font-size: 15px;
	}

	.solo {
		grid-row: 4;
		width: 29px;
		font-weight: bold;
	}

	.arm {
		grid-row: 5;
		width: 29px;
	}

	.arm svg {
		width: 12px;
		height: 12px;
	}

	.cue-solo {
		grid-row: 3;
		width: 30px;
		background: #c9d0dc;
		color: #69717d;
	}

	.cue {
		grid-row: 4 / 6;
		align-self: center;
		width: 34px;
		height: 36px;
	}

	.dots {
		width: 10px;
		height: 142px;
		margin-left: 17px;
		overflow: visible;
	}

	.fader {
		display: grid;
	}

	.fader svg {
		grid-area: 1 / 1;
		width: 48px;
		height: 142px;
	}

	.fader text {
		font-size: 13px;
		font-weight: normal;
		fill: #20262e;
	}

	.fader input {
		grid-area: 1 / 1;
		width: 12px;
		height: 141px;
		margin-left: 16px;
		appearance: none;
		writing-mode: vertical-lr;
		direction: rtl;
	}

	.fader input::-webkit-slider-thumb {
		appearance: none;
		width: 12px;
		height: 12px;
		background: linear-gradient(to left, #4b5766 1px, #87929d 1px 9px, #4b5766 9px);
		clip-path: polygon(100% 0, 100% 100%, 0 50%);
	}

	.empty h3,
	.rest {
		background: var(--surface);
	}

	.empty {
		margin-left: 1px;
	}

	.hint {
		flex: none;
		display: flex;
		flex-direction: column;
		height: 181px;
		background: var(--surface);
		text-align: center;
		line-height: 23px;
	}

	.hint .hot {
		height: 21px;
		margin-bottom: 46px;
	}

	.rest {
		flex: none;
		height: 388px;
	}

	.rail {
		flex: none;
		display: flex;
		flex-direction: column;
		align-items: flex-end;
		justify-content: space-between;
		width: 41px;
	}

	.right {
		flex-direction: column;
		align-items: flex-end;
		gap: 6px;
		width: 31px;
		height: 60px;
		border-bottom-left-radius: 6px;
	}

	.right::before {
		right: 100%;
		top: 0;
		background: radial-gradient(circle at 0 100%, transparent 6px, var(--dark) 6px);
	}

	.right::after {
		right: 0;
		top: 100%;
		background: radial-gradient(circle at 0 100%, transparent 6px, var(--dark) 6px);
	}

	.toggles {
		display: flex;
		flex-direction: column;
		align-items: flex-end;
		gap: 8px;
		padding: 0 4px 13px 0;
		font-size: 9px;
		font-weight: normal;
	}

	.toggles div {
		display: flex;
		gap: 3px;
	}

	.toggles button {
		width: 16px;
		height: 16px;
		border-radius: 8px;
		background: var(--dark);
		color: #a7afb6;
	}

	.toggles .on {
		background: var(--on);
		color: #4f5542;
	}

	.toggles .half-l {
		width: 15px;
		border-radius: 8px 0 0 8px;
	}

	.toggles .half-r {
		width: 15px;
		border-radius: 0 8px 8px 0;
	}

	.toggles svg {
		width: 12px;
		height: 12px;
	}

	/* device view */
	.detail {
		flex: 252 1 0;
		min-height: 0;
		display: grid;
		grid-template-columns: 252px 1fr;
		gap: 10px;
		margin: 10px 0;
	}

	.info {
		padding: 6px;
		border-radius: 7px;
		background: var(--panel);
	}

	.info-body {
		height: 100%;
		border-top: 22px solid var(--light);
		background: var(--surface);
	}

	.chain {
		display: flex;
		align-items: center;
		padding: 6px;
		border-radius: 7px;
		background: var(--detail);
	}

	.minimeter {
		width: 7px;
		height: 51px;
		margin-right: 2px;
	}

	.device {
		flex: none;
		display: flex;
		flex-direction: column;
		align-self: stretch;
		width: 199px;
		margin: 1px 4px;
		border: 1px solid var(--panel);
		border-radius: 7px;
		overflow: hidden;
		background: var(--surface);
	}

	.device header {
		flex: none;
		display: flex;
		align-items: center;
		gap: 2px;
		height: 21px;
		padding: 0 3px;
		background: #f3d116;
	}

	.device h3 {
		flex: 1;
		padding-left: 4px;
		font-size: 13px;
		font-style: italic;
	}

	.device header svg {
		width: 18px;
		height: 18px;
	}

	.device header .power svg {
		width: 16px;
		height: 16px;
	}

	.device header .hand {
		width: 13px;
		height: 14px;
	}

	.body {
		flex: 1;
		display: flex;
		justify-content: space-between;
		padding: 19px 7px 12px 2px;
	}

	.plugin {
		width: 134px;
		color: #fff;
	}

	.port {
		display: flex;
		justify-content: space-between;
		height: 22px;
		padding: 0 12px 0 8px;
		background: #000;
		line-height: 21px;
	}

	.plugin .name {
		display: flex;
		align-items: center;
		justify-content: space-between;
		height: 25px;
		padding: 0 4px 0 8px;
		background: #5f606b;
	}

	.plugin button {
		width: 58px;
		height: 19px;
		border: 1px solid #2d2e36;
		color: #b0b2bd;
		font-size: 13px;
	}

	.plugin svg {
		width: 134px;
		height: 76px;
		background: #383940;
	}

	.plugin text {
		font-size: 13px;
		font-weight: normal;
		fill: #c3c4c8;
	}

	.drywet {
		display: flex;
		flex-direction: column;
		align-items: center;
		justify-content: flex-end;
		color: #fff;
		font-size: 13px;
	}

	.drywet svg {
		width: 34px;
		height: 32px;
	}

	.fxdrop {
		flex: 1;
		display: grid;
		place-items: center;
		align-self: stretch;
		background: var(--surface);
	}

	/* footer */
	footer {
		flex: none;
		display: flex;
		align-items: center;
		gap: 10px;
		height: 28px;
	}

	.message {
		flex: 1;
		height: 28px;
		border: 5px solid var(--panel);
		border-radius: 5px;
		background: var(--surface);
	}

	.overview {
		width: 263px;
		height: 28px;
		padding: 4px 5px;
		border-radius: 5px;
		background: var(--detail);
	}

	.tab {
		position: relative;
		display: flex;
		align-items: center;
		gap: 5px;
		width: 80px;
		height: 38px;
		margin-top: -10px;
		padding: 10px 6px 0 7px;
		border-radius: 0 0 5px 5px;
		background: var(--detail);
		white-space: nowrap;
	}

	.tab::before,
	.tab::after {
		content: '';
		position: absolute;
		top: 0;
		width: 5px;
		height: 5px;
	}

	.tab::before {
		right: 100%;
		background: radial-gradient(circle at 0 100%, transparent 5px, var(--detail) 5px);
	}

	.tab::after {
		left: 100%;
		background: radial-gradient(circle at 100% 100%, transparent 5px, var(--detail) 5px);
	}

	.tab span {
		flex: 1;
		height: 20px;
		overflow: hidden;
		border-top: 2px solid #d9c02a;
		background: var(--surface);
		font-weight: normal;
		line-height: 19px;
	}

	.grip {
		position: absolute;
		right: 0;
		bottom: 0;
		width: 12px;
		height: 12px;
	}
</style>
